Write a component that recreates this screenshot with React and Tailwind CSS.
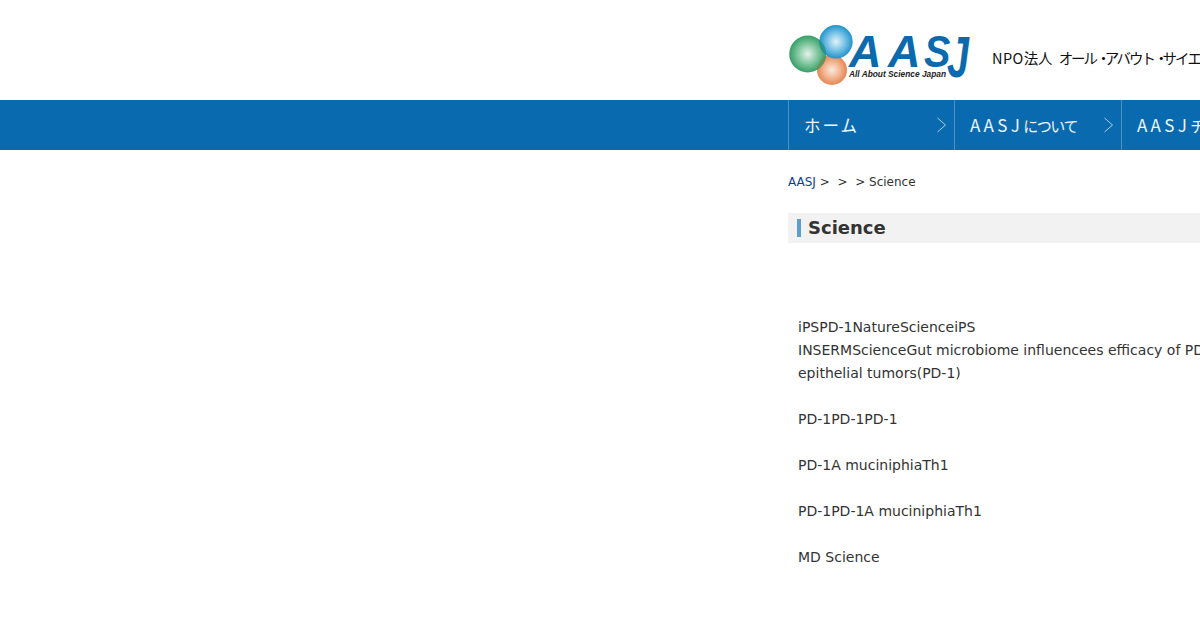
const cjk = "font-['Noto_Sans_CJK_JP','Noto_Sans',sans-serif]";

function Logo() {
  return (
    <svg width="184" height="62" viewBox="0 0 184 62" className="block">
      <defs>
        <radialGradient id="g1" cx="50%" cy="50%" r="52%">
          <stop offset="0" stopColor="#e6f3ec" />
          <stop offset="0.55" stopColor="#7cc49b" />
          <stop offset="1" stopColor="#2f9a63" />
        </radialGradient>
        <radialGradient id="g2" cx="50%" cy="50%" r="52%">
          <stop offset="0" stopColor="#e4f3fa" />
          <stop offset="0.55" stopColor="#72bfe4" />
          <stop offset="1" stopColor="#1c8fc8" />
        </radialGradient>
        <radialGradient id="g3" cx="50%" cy="50%" r="52%">
          <stop offset="0" stopColor="#fbeadf" />
          <stop offset="0.55" stopColor="#f2b28c" />
          <stop offset="1" stopColor="#e4814f" />
        </radialGradient>
        <clipPath id="clipBlue"><circle cx="48" cy="17.7" r="16.7" /></clipPath>
        <clipPath id="clipOrange"><circle cx="44" cy="46" r="15" /></clipPath>
      </defs>
      <circle cx="44" cy="46" r="15" fill="url(#g3)" />
      <circle cx="19.7" cy="30" r="18.5" fill="url(#g1)" />
      <circle cx="48" cy="17.7" r="16.7" fill="url(#g2)" />
      <circle cx="19.7" cy="30" r="18.5" fill="#2a8f7c" opacity="0.8" clipPath="url(#clipBlue)" />
      <circle cx="19.7" cy="30" r="18.5" fill="#6f8f58" opacity="0.8" clipPath="url(#clipOrange)" />
      <g fill="#0b69ae" fontFamily="Liberation Sans" fontWeight="700" fontStyle="italic">
        <text transform="translate(61 43) scale(1 0.98)" fontSize="45">A</text>
        <text transform="translate(100 43) scale(1 0.98)" fontSize="45">A</text>
        <text transform="translate(136 43) scale(0.88 0.98)" fontSize="45">S</text>
        <text transform="translate(159 53) scale(0.68 1)" fontSize="58">J</text>
      </g>
      <text x="61" y="52.5" fill="#222" fontFamily="Liberation Sans" fontWeight="700" fontStyle="italic" fontSize="8.2" textLength="97" lengthAdjust="spacingAndGlyphs">All About Science Japan</text>
    </svg>
  );
}

function Chevron() {
  return (
    <svg width="11" height="16" viewBox="0 0 11 16" fill="none" className="mr-[7px] shrink-0">
      <path d="M1.5 1 L9.5 8 L1.5 15" stroke="#a9cfe8" strokeWidth="1" />
    </svg>
  );
}

function NavItem({ children, wide }) {
  return (
    <div className={`flex h-full shrink-0 items-center border-l border-[#4a90c4] ${wide ? "w-[167px]" : "w-[166px]"}`}>
      <span className={`${cjk} flex-1 overflow-hidden pl-[15px] text-[15px] font-normal leading-[24px] text-[#eef5fa] whitespace-nowrap`}>{children}</span>
      <Chevron />
    </div>
  );
}

const Dot = () => <span className="tracking-[-6px]">・</span>;

export default function App() {
  return (
    <div className="h-[630px] w-[1200px] overflow-hidden bg-white font-['DejaVu_Sans',sans-serif] text-[#333]">
      <header className="flex h-[100px] items-start pl-[788px]">
        <div className="mt-[24px] shrink-0"><Logo /></div>
        <div className={`${cjk} mt-[48px] ml-[20px] whitespace-nowrap text-[14.5px] font-normal leading-[20px] text-[#111]`}>
          <span className="tracking-[0.4px]">NPO</span>法人
          <span className="ml-[6px] tracking-[-2px]">オール</span>
          <Dot />
          <span className="tracking-[-2px]">アバウト</span>
          <Dot />
          <span className="tracking-[-2px]">サイエンス</span>
          <Dot />
          <span className="tracking-[-2px]">ジャパン</span>
        </div>
      </header>
      <nav className="flex h-[50px] bg-[#0a6ab0] pl-[788px]">
        <NavItem><span className="text-[16.5px] tracking-[2px]">ホーム</span></NavItem>
        <NavItem wide><span className="text-[17px] tracking-[3.4px]">AASJ</span><span className="tracking-[-1.4px]">について</span></NavItem>
        <NavItem wide><span className="text-[17px] tracking-[3.4px]">AASJ</span><span className="tracking-[-1px]">チャンネル</span></NavItem>
      </nav>
      <main className="box-content w-[1000px] pl-[788px]">
        <div className="mt-[24px] flex h-[16px] items-center whitespace-nowrap text-[12px] leading-[16px]">
          <span className="text-[#0b3f8f]">AASJ</span>
          <span className="whitespace-pre"> {">"}  {">"}  {">"} Science</span>
        </div>
        <div className="mt-[23px] flex h-[30px] w-[600px] items-center bg-[#f2f2f2] pl-[9px]">
          <span className="h-[18px] w-[4px] bg-[#5a9fd0]" />
          <h1 className="ml-[7px] text-[18px] font-bold leading-none text-[#333]">Science</h1>
        </div>
        <p className="mt-[73px] w-[700px] whitespace-nowrap pl-[10px] text-[14px] leading-[23px]">
          iPSPD-1NatureScienceiPS<br />
          INSERMScienceGut microbiome influencees efficacy of PD-1-based immunotherapy against<br />
          epithelial tumors(PD-1)<br />
          <br />
          PD-1PD-1PD-1<br />
          <br />
          PD-1A muciniphiaTh1<br />
          <br />
          PD-1PD-1A muciniphiaTh1<br />
          <br />
          MD Science
        </p>
      </main>
    </div>
  );
}
